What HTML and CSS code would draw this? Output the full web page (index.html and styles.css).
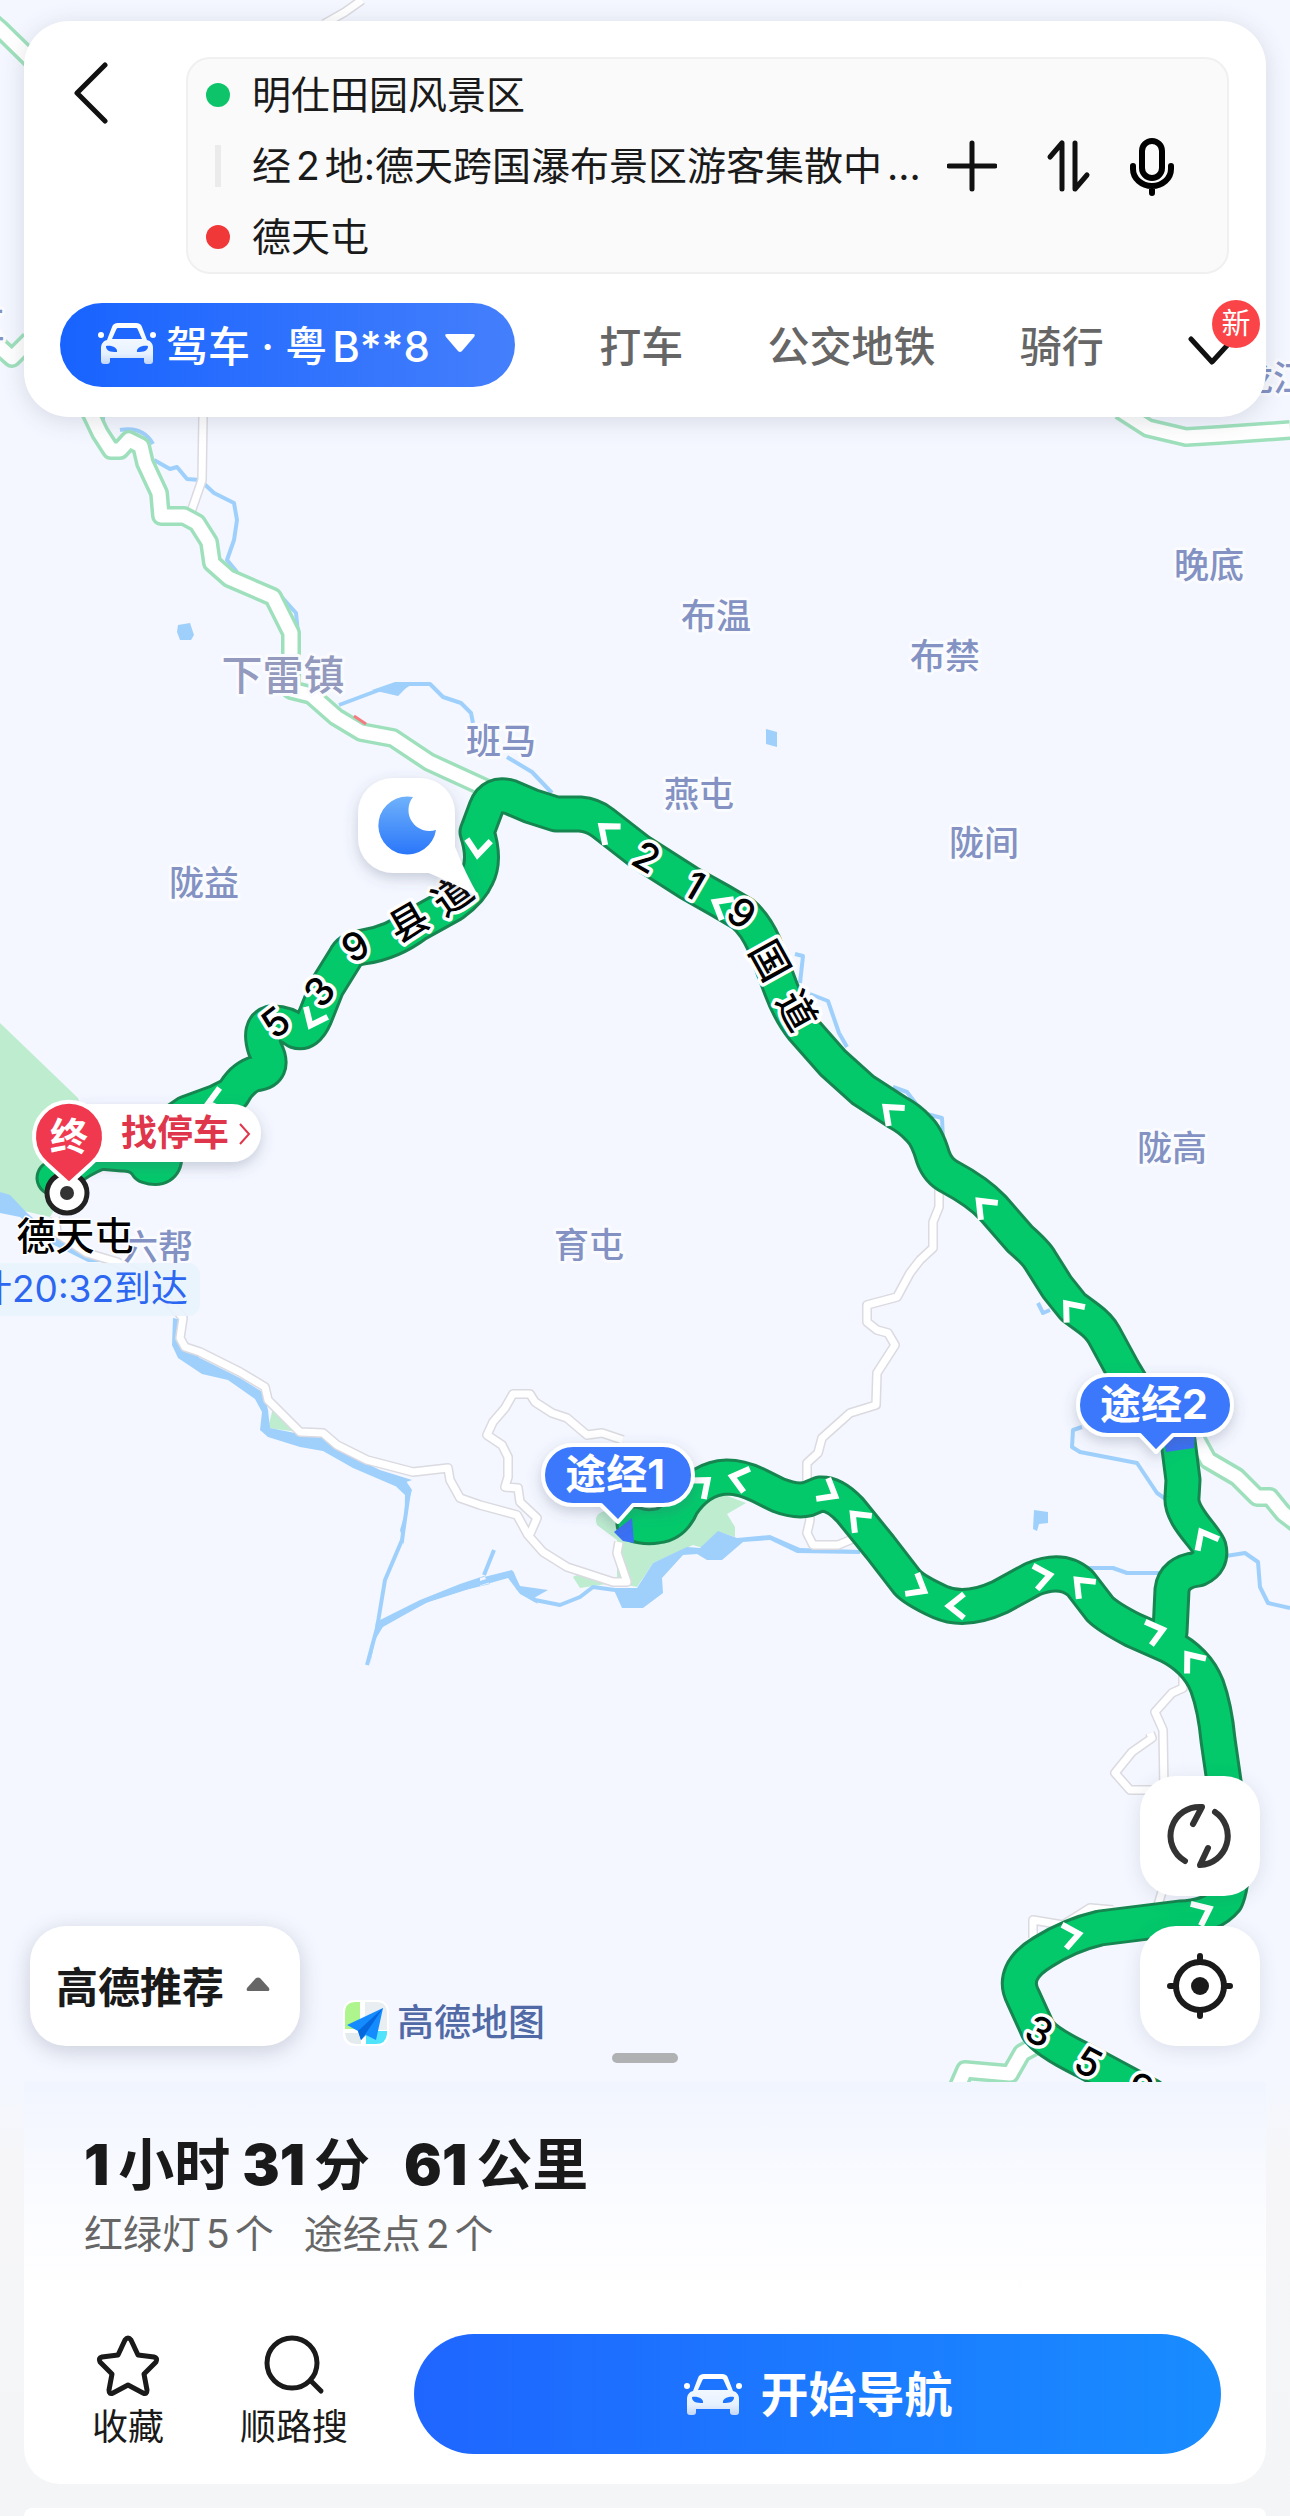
FILE: index.html
```html
<!DOCTYPE html>
<html lang="zh-CN">
<head>
<meta charset="utf-8">
<meta name="viewport" content="width=device-width, initial-scale=1">
<title>路线规划</title>
<link rel="stylesheet" href="styles.css">
</head>
<body>
<svg class="defs" aria-hidden="true">
  <defs>
    <linearGradient id="carFill" x1="0" y1="0" x2="0" y2="1"><stop offset="0" stop-color="#fff"/><stop offset="0.75" stop-color="#e6f1ff"/><stop offset="1" stop-color="#c3d6f5"/></linearGradient>
    <linearGradient id="moonFill" x1="0" y1="0" x2="0" y2="1"><stop offset="0" stop-color="#6fb2fb"/><stop offset="1" stop-color="#2a76fa"/></linearGradient>
    <filter id="soft" x="-30%" y="-30%" width="160%" height="170%"><feDropShadow dx="0" dy="5" stdDeviation="7" flood-color="#4a5878" flood-opacity="0.28"/></filter>
    <symbol id="car" viewBox="0 0 60 42">
      <path fill="url(#carFill)" fill-rule="evenodd" d="M21 1h18c3 0 5 1 6 4l5 13c4 1 6 4 6 8v13c0 2-1 3-3 3h-3c-2 0-3-1-3-3v-3H13v3c0 2-1 3-3 3H7c-2 0-3-1-3-3V26c0-4 2-7 6-8l5-13c1-3 3-4 6-4zm1 5c-2 0-2 0-3 2l-4 9h30l-4-9c-1-2-1-2-3-2zM9 24c0 5 4 6 11 6 1-4-5-7-11-6zm42 0c-6-1-12 2-11 6 7 0 11-1 11-6z"/>
      <circle cx="4" cy="13" r="3" fill="#fff"/><circle cx="56" cy="13" r="3" fill="#fff"/>
    </symbol>
    <path id="arrow" d="M-12 9 0 -6 12 9"/>
  </defs>
</svg>
<div class="app">
  <main class="map">
    <svg class="map-canvas" viewBox="0 0 1290 2082" preserveAspectRatio="xMidYMid slice" role="img" aria-label="路线地图">
      <g class="park">
        <path d="M0 1023 78 1098 92 1145 50 1217 20 1210 0 1192z"/>
        <path d="M273 1408 298 1432 268 1428z"/>
        <path d="M597 1525Q590 1508 625 1510L722 1494 746 1503 727 1514 735 1527 735 1537 720 1532 710 1550 693 1545 653 1563 637 1587 617 1583 617 1540z"/>
        <path d="M573 1577 580 1573 613 1583 580 1588z"/>
      </g>
      <g class="water-area">
        <path d="M0 1192 10 1195 27 1213 53 1235 100 1262 88 1262 50 1243 20 1217 0 1213z"/>
        <path d="M173 1318 172 1345 178 1358 202 1374 228 1380 255 1399 262 1412 260 1430 268 1437 300 1447 323 1451 353 1468 395 1486 412 1480 380 1470 355 1458 323 1436 300 1434 270 1428 268 1410 264 1393 240 1378 200 1358 180 1340 183 1320z"/>
        <path d="M613 1588 637 1588 653 1563 687 1547 700 1548 718 1531 737 1538 770 1535 800 1548 860 1550 860 1554 797 1553 770 1540 743 1542 722 1560 707 1560 697 1554 683 1555 662 1578 663 1593 643 1608 622 1608z"/>
        <path d="M178 625 190 623 194 635 191 640 180 640 177 632z"/>
        <path d="M766 729 777 732 777 747 766 744z"/>
        <path d="M1034 1510 1048 1512 1048 1523 1039 1524 1037 1531 1033 1529z"/>
        <path d="M372 690 395 682 412 682 404 690 398 696zM404 1545 400 1530 412 1490 404 1478 385 1476 405 1495zM370 1665 375 1640 384 1625 430 1601 465 1590 490 1584 484 1576 460 1584 420 1600 376 1622zM480 1578 512 1570 520 1586 548 1590 534 1598 538 1604 520 1594 508 1578 480 1586z"/>
      </g>
      <g class="water">
        <path d="M103 417v10M120 430Q143 426 153 444M154 460 170 469 177 467 187 479 200 480 214 493 234 503 237 520 234 540 227 560 237 572M280 595 296 613 298 633"/>
        <path d="M339 705 379 690 400 689 409 684 430 684 443 697 461 703 471 713 473 723M507 757 532 772 552 793"/>
        <path d="M795 954 803 956 800 983M810 994 828 1001 839 1033 847 1047M893 1087 907 1092 923 1113 942 1118 943 1140M1038 1303 1043 1313 1050 1310"/>
        <path d="M395 1480 409 1492 402 1540 385 1580 377 1628 367 1665M377 1628 425 1601 465 1588 490 1580 512 1573 518 1588 535 1600 560 1605 580 1597 593 1587 615 1590M484 1575 494 1550"/>
        <path d="M1082 1427 1073 1430 1072 1447 1080 1452 1137 1463 1157 1493 1170 1502M1088 1568 1113 1568 1127 1573 1165 1573M1226 1556 1245 1553 1258 1562 1260 1587 1268 1603 1290 1608"/>
      </g>
      <g class="minor-case">
        <path id="m1" d="M362 0 345 12 324 24M203 417 202 480 191 512M55 1217 57 1233 87 1253 117 1262 150 1280 183 1318 180 1338 185 1347 200 1352 240 1372 265 1387 268 1400 300 1432 323 1433 337 1445 367 1460 413 1472 448 1468 450 1480 460 1498 480 1505 517 1515 528 1535 543 1552 567 1567 613 1582 627 1582 617 1553 619 1542"/>
        <path id="m2" d="M623 1440 602 1433 587 1435 567 1418 552 1413 535 1402 530 1394 513 1394 505 1408 493 1422 487 1435 502 1445 508 1457 508 1477 505 1487 518 1488 520 1502 537 1518 530 1534"/>
        <path id="m3" d="M939 1185 939 1207 933 1222 933 1248 920 1260 910 1273 897 1297 867 1305 867 1322 877 1330 888 1333 895 1345 877 1373 876 1405 850 1413 822 1438 818 1453 807 1463 807 1490 810 1520 807 1533 813 1545 838 1545 855 1538"/>
        <path id="m4" d="M1183 1670V1688L1172 1693 1155 1712 1163 1730 1164 1790H1130L1115 1773 1132 1752 1152 1738 1150 1733M1164 1785V1885L1158 1905M1033 1938V1920L1063 1925 1090 1908 1113 1910"/>
      </g>
      <g class="minor-fill"><use href="#m1"/><use href="#m2"/><use href="#m3"/><use href="#m4"/></g>
      <g class="major-case">
        <path id="j1" d="M-8 22 0 29 40 68M-8 340 12 358 30 340M89 410 100 433 111 450H120L129 440 141 446 145 463 159 493 161 516H184L197 523 209 542 212 563 229 578 273 597 291 633V690L311 695 336 717 361 732 393 738 429 762 490 790"/>
        <path id="j2" d="M1120 410 1148 428 1186 437 1219 435 1290 430M1197 1440 1208 1460 1237 1477 1257 1497H1270L1283 1513 1296 1523M958 2086 965 2070 1010 2074 1022 2053 1046 2040"/>
      </g>
      <g class="major-fill"><use href="#j1"/><use href="#j2"/></g>
      <path d="m354 716 12 8" stroke="#f47b80" stroke-width="3"/>

      <g class="route-case">
        <path id="r1" d="M634 1524Q645 1528 657 1526Q674 1524 682 1505Q700 1478 727 1477Q742 1477 760 1486L778 1495Q796 1502 808 1499L820 1494Q834 1493 850 1510L880 1547 907 1582Q914 1590 940 1602Q965 1613 1000 1597L1033 1579Q1062 1567 1080 1583L1100 1609Q1108 1617 1133 1630L1167 1645Q1197 1660 1207 1686Q1215 1708 1218 1740L1231 1830Q1235 1880 1226 1900Q1212 1917 1180 1918L1100 1928Q1070 1935 1043 1952Q1010 1972 1023 1997L1038 2030Q1046 2042 1083 2060L1150 2096"/>
        <path id="r2" d="M1170 1632 1172 1590Q1174 1572 1198 1569Q1213 1562 1209 1547C1206 1537 1180 1516 1182 1497L1183 1480 1176 1425 1135 1390 1123 1370 1104 1335Q1099 1326 1088 1318L1073 1307 1057 1287 1040 1260Q1036 1253 1020 1239L993 1208Q978 1192 950 1177Q938 1171 933 1157Q927 1136 918 1128Q910 1119 897 1112L863 1090 833 1063 803 1029Q790 1013 781 989L764 944Q755 924 743 914L721 901 689 883 639 851 603 823Q593 815 580 814H556L531 806 510 797Q492 792 486 808L477 832Q486 860 477 877Q471 891 453 904L417 924Q392 943 363 947Q349 949 345 958L327 987 315 1017Q307 1035 296 1031Q285 1022 271 1023Q258 1027 265 1049Q277 1072 254 1074Q241 1079 233 1094L217 1102 187 1113Q156 1132 165 1155Q165 1172 147 1166Q140 1154 123 1154L100 1152Q80 1160 67 1171L54 1178"/>
      </g>
      <g class="route-fill"><use href="#r1"/><use href="#r2"/></g>
      <path d="M1162 1432h33l-1 16-28 4zM632 1518l2 25-11-2-9-9z" fill="#3a70f5"/>
      <g class="arrows">
        <use href="#arrow" transform="translate(606 830) rotate(-50)"/>
        <use href="#arrow" transform="translate(720 905) rotate(-60)"/>
        <use href="#arrow" transform="translate(890 1111) rotate(-48)"/>
        <use href="#arrow" transform="translate(983 1205) rotate(-45)"/>
        <use href="#arrow" transform="translate(1070 1308) rotate(-40)"/>
        <use href="#arrow" transform="translate(1204 1537) rotate(-28)"/>
        <use href="#arrow" transform="translate(1191 1659) rotate(-38)"/>
        <use href="#arrow" transform="translate(1157 1631) rotate(75)"/>
        <use href="#arrow" transform="translate(1044 1576) rotate(80)"/>
        <use href="#arrow" transform="translate(1081 1584) rotate(-45)"/>
        <use href="#arrow" transform="translate(955 1606) rotate(-90)"/>
        <use href="#arrow" transform="translate(919 1588) rotate(120)"/>
        <use href="#arrow" transform="translate(830 1493) rotate(120)"/>
        <use href="#arrow" transform="translate(857 1518) rotate(-45)"/>
        <use href="#arrow" transform="translate(738 1478) rotate(-75)"/>
        <use href="#arrow" transform="translate(703 1484) rotate(50)"/>
        <use href="#arrow" transform="translate(1073 1935) rotate(80)"/>
        <use href="#arrow" transform="translate(1204 1911) rotate(65)"/>
        <use href="#arrow" transform="translate(478 849) rotate(185)"/>
        <use href="#arrow" transform="translate(313 1020) rotate(205)"/>
        <use href="#arrow" transform="translate(214 1102) rotate(-105)"/>
      </g>

      <g class="place">
        <text x="283" y="690" class="town">下雷镇</text>
        <text x="501" y="754">班马</text>
        <text x="204" y="896">陇益</text>
        <text x="716" y="629">布温</text>
        <text x="945" y="669">布禁</text>
        <text x="1209" y="578">晚底</text>
        <text x="699" y="807">燕屯</text>
        <text x="984" y="856">陇间</text>
        <text x="1172" y="1161">陇高</text>
        <text x="589" y="1258">育屯</text>
        <text x="158" y="1260">六帮</text>
        <text x="1273" y="391">龙江</text>
        <text x="-13" y="338">区</text>
      </g>
      <g class="road-name">
        <text transform="translate(646 858) rotate(30)" y="13">2</text>
        <text transform="translate(694 886) rotate(30)" y="13">1</text>
        <text transform="translate(741 914) rotate(35)" y="13">9</text>
        <text transform="translate(769 961) rotate(61)" y="13">国</text>
        <text transform="translate(796 1011) rotate(61)" y="13">道</text>
        <text transform="translate(276 1023) rotate(-38)" y="13">5</text>
        <text transform="translate(320 992) rotate(-48)" y="13">3</text>
        <text transform="translate(356 947) rotate(-30)" y="13">9</text>
        <text transform="translate(409 923) rotate(-30)" y="13">县</text>
        <text transform="translate(453 896) rotate(-35)" y="13">道</text>
        <text transform="translate(1039 2032) rotate(28)" y="13">3</text>
        <text transform="translate(1088 2063) rotate(28)" y="13">5</text>
        <text transform="translate(1140 2089) rotate(28)" y="13">9</text>
      </g>

      <g filter="url(#soft)">
        <path d="M393 778h27a35 35 0 0 1 35 35v34q10 26 24 50q-26 -14 -50 -24h-36a35 35 0 0 1-35-35v-25a35 35 0 0 1 35-35z" fill="#fff"/>
      </g>
      <path d="M413 797A29 29 0 1 0 436 830A21 21 0 0 1 413 797z" fill="url(#moonFill)"/>

      <g class="via" filter="url(#soft)">
        <path d="M573 1445h90a30 30 0 0 1 0 60h-30l-15 17-17-17h-28a30 30 0 0 1 0-60z"/>
        <path d="M1108 1375h94a30 30 0 0 1 0 60h-29l-17 17-16-17h-32a30 30 0 0 1 0-60z"/>
      </g>
      <g class="via-text"><text x="615" y="1489">途经1</text><text x="1154" y="1419">途经2</text></g>

      <circle cx="67" cy="1193" r="20" fill="#fff" stroke="#222" stroke-width="5"/>
      <circle cx="67" cy="1193" r="7" fill="#333"/>
      <a href="#parking" aria-label="找停车">
        <rect x="60" y="1104" width="201" height="58" rx="29" fill="#fff" filter="url(#soft)"/>
        <text x="175" y="1146" class="parking">找停车</text>
        <path d="m240 1124 9 10-9 10" fill="none" stroke="#e0364b" stroke-width="2"/>
      </a>
      <path d="M47 1164A35 35 0 1 1 91 1164L69 1184z" fill="#f0384f" stroke="#fff" stroke-width="4" stroke-linejoin="round"/>
      <text x="69" y="1150" class="end">终</text>
      <text x="75" y="1250" class="dest">德天屯</text>
      <rect x="-20" y="1263" width="220" height="53" rx="12" fill="#e9f3fd" fill-opacity="0.9"/>
      <text x="188" y="1302" class="eta">预计20:32到达</text>
    </svg>

    <header class="planner">
      <div class="planner-top">
        <button class="icon-btn back" aria-label="返回"><svg width="36" height="62" viewBox="0 0 36 62"><path d="M33 3 5 31l28 28"/></svg></button>
        <section class="route-box" aria-label="行程">
          <ul class="stops">
            <li><i class="dot start"></i><span>明仕田园风景区</span></li>
            <li><i class="bar"></i><span>经<b class="num">2</b>地:德天跨国瀑布景区游客集散中<b class="more-text">...</b></span></li>
            <li><i class="dot finish"></i><span>德天屯</span></li>
          </ul>
          <div class="tools">
            <button class="icon-btn" aria-label="添加途经点"><svg width="50" height="60" viewBox="0 0 50 60"><path d="M25 7v46M2 30h46"/></svg></button>
            <button class="icon-btn" aria-label="交换起终点"><svg width="50" height="60" viewBox="0 0 50 60"><path d="M7 21 19 7v46M32 7v46l12-14"/></svg></button>
            <button class="icon-btn mic" aria-label="语音输入"><svg width="50" height="60" viewBox="0 0 50 60"><rect x="15" y="5" width="20" height="37" rx="10"/><path d="M6 30v3a19 17 0 0 0 38 0v-3M25 50v7"/></svg></button>
          </div>
        </section>
      </div>
      <nav class="modes" aria-label="出行方式">
        <button class="mode active"><svg width="60" height="42"><use href="#car"/></svg><span>驾车 · 粤<b class="num">B**8</b></span><svg width="32" height="20" viewBox="0 0 32 20"><path d="M3 1h26q3 0 1 3L18 18q-2 2-4 0L2 4Q0 1 3 1z" fill="#fff"/></svg></button>
        <button class="mode">打车</button>
        <button class="mode">公交地铁</button>
        <button class="mode">骑行</button>
        <button class="icon-btn more" aria-label="更多出行方式"><svg width="48" height="30" viewBox="0 0 48 30"><path d="M3 3 24 26 45 3"/></svg><em class="badge">新</em></button>
      </nav>
    </header>

    <div class="map-foot">
      <button class="prefer">高德推荐<svg width="24" height="14" viewBox="0 0 24 14"><path d="M10 1q2-1 4 0l9 10q1 3-1 3H2q-2 0-1-3z" fill="#666"/></svg></button>
      <div class="brand">
        <svg width="46" height="46" viewBox="0 0 46 46"><rect width="46" height="46" rx="11" fill="#fff"/><path d="M17 2v27H2V13Q2 2 13 2z" fill="#adf58c"/><path d="M22 2h11q11 0 11 11v17H22z" fill="#e9eef2"/><path d="M2 33h16v11h-5Q3 44 2 33z" fill="#e4ebee"/><path d="M23 31h21v3q-1 10-11 10H23z" fill="#50e3fb"/><path d="M40 8 4 25l11 6 3 9 5-5 10 5z" fill="#148bff"/><path d="M40 8 15 31l3 9 5-7z" fill="#0568dd"/></svg>
        <span>高德地图</span>
      </div>
      <div class="float-tools">
        <button class="float-btn" aria-label="刷新路线"><svg width="66" height="66" viewBox="0 0 66 66" stroke="#333"><path d="M18 58A29 29 0 0 1 35 4L26 21M48 9A29 29 0 0 1 33 62L41 45"/></svg></button>
        <button class="float-btn" aria-label="定位"><svg width="66" height="66" viewBox="0 0 66 66" stroke="#1a1a1a"><circle cx="33" cy="33" r="24"/><path d="M33 3v6M33 57v6M3 33h6M57 33h6"/><circle cx="33" cy="33" r="9" fill="#1a1a1a" stroke="none"/></svg></button>
      </div>
      <i class="handle"></i>
    </div>
  </main>

  <section class="sheet">
    <div class="summary">
      <h1><b>1</b>小时<b class="gap-s">31</b>分<b class="gap-l">61</b>公里</h1>
      <p><span>红绿灯<b class="num">5</b>个</span><span>途经点<b class="num">2</b>个</span></p>
      <div class="actions">
        <button class="act"><svg width="66" height="62" viewBox="0 0 66 62"><path d="M30 5q3-4 6 0l7 15 16 2q4 1 2 5L49 39l3 16q0 5-4 3L33 50l-15 8q-4 2-4-3l3-16L5 27q-2-4 2-5l16-2z"/></svg>收藏</button>
        <button class="act"><svg width="66" height="62" viewBox="0 0 66 62"><circle cx="31" cy="28" r="25"/><path d="M50 46 60 56"/></svg>顺路搜</button>
        <button class="go"><svg width="60" height="42"><use href="#car"/></svg><span>开始导航</span></button>
      </div>
    </div>
    <div class="next"></div>
  </section>
</div>
</body>
</html>
```
FILE: styles.css
```css
* { box-sizing: border-box; }
body {
  margin: 0;
  background: #f3f5f7;
  color: #1a1a1a;
  font-family: Inter, "Noto Sans CJK SC", sans-serif;
}
button {
  border: 0;
  padding: 0;
  background: none;
  color: inherit;
  font: inherit;
  white-space: nowrap;
}
svg { display: block; flex: none; }
.defs { position: absolute; width: 0; height: 0; }
.app {
  display: flex;
  flex-direction: column;
  min-height: 100vh;
}

/* map */
.map {
  position: relative;
  flex: 1;
  display: flex;
  flex-direction: column;
  justify-content: space-between;
  gap: 400px;
  padding: 21px 24px 36px;
  background: #f4f7ff;
  overflow: hidden;
}
.map-canvas {
  position: absolute;
  inset: 0;
  width: 100%;
  height: 100%;
}
.park { fill: #bdeccf; }
.water-area { fill: #9fd0fb; }
.water { fill: none; stroke: #9fd0fb; stroke-width: 4; stroke-linejoin: round; }
.minor-case, .minor-fill, .major-case, .major-fill, .route-case, .route-fill {
  fill: none;
  stroke-linejoin: round;
}
.minor-case { stroke: #dadae0; stroke-width: 10; }
.minor-fill { stroke: #fff; stroke-width: 7; }
.major-case { stroke: #9fe0bc; stroke-width: 20; }
.major-fill { stroke: #fff; stroke-width: 13; }
.route-case, .route-fill { stroke-linecap: round; }
.route-case { stroke: #16854f; stroke-width: 37; }
.route-fill { stroke: #03c96b; stroke-width: 31; }
.arrows { fill: none; stroke: #fff; stroke-width: 6; }
.map-canvas text {
  text-anchor: middle;
  font-weight: 500;
  paint-order: stroke;
  stroke-linejoin: round;
}
.place text { font-size: 35px; fill: #8392c2; stroke: #fafbff; stroke-width: 6px; }
.place .town { font-size: 41px; fill: #939abd; }
.road-name text { font-size: 39px; fill: #000; stroke: #fff; stroke-width: 7px; }
.via path { fill: #3a78fb; stroke: #fff; stroke-width: 4; stroke-linejoin: round; }
.via-text text { font-size: 41px; font-weight: 700; fill: #fff; }
.map-canvas .parking { font-size: 36px; font-weight: 700; fill: #e0364b; }
.map-canvas .end { font-size: 38px; font-weight: 700; fill: #fff; }
.map-canvas .dest { font-size: 39px; fill: #000; stroke: #fff; stroke-width: 3px; }
.map-canvas .eta { font-size: 37px; font-weight: 400; fill: #2c66f1; text-anchor: end; }

/* planner card */
.planner {
  position: relative;
  padding: 36px 30px 30px 36px;
  border-radius: 45px;
  background: #fff;
  box-shadow: 0 4px 24px rgba(60, 70, 90, 0.16);
}
.planner-top { display: flex; align-items: flex-start; }
.icon-btn svg {
  fill: none;
  stroke: #111;
  stroke-width: 5;
  stroke-linecap: round;
  stroke-linejoin: round;
}
.icon-btn.mic svg { stroke: #000; stroke-width: 6; }
.back { flex: none; width: 126px; padding: 5px 0 0 12px; }
.route-box {
  flex: 1;
  min-width: 0;
  display: flex;
  align-items: center;
  margin-right: 7px;
  padding-right: 50px;
  border: 2px solid #f0f0f1;
  border-radius: 24px;
  background: #fafafa;
}
.stops {
  flex: 1;
  min-width: 0;
  margin: 0;
  padding: 0 0 0 18px;
  list-style: none;
  font-size: 39px;
  line-height: 70px;
}
.stops li { display: flex; align-items: center; gap: 22px; height: 71px; }
.stops span { overflow: hidden; white-space: nowrap; }
.stops i { flex: none; width: 24px; }
.dot { height: 24px; border-radius: 50%; }
.start { background: #0dc46b; }
.finish { background: #f03838; }
.bar { height: 42px; border: solid #fafafa; border-width: 0 9px; background: #ebebeb; }
.num { margin: 0 5px; font-weight: inherit; }
.more-text { margin-left: 5px; font-weight: 400; }
.tools { display: flex; gap: 46px; }
.mic { margin-left: -12px; }
.modes {
  display: flex;
  align-items: center;
  justify-content: space-between;
  margin-top: 29px;
  font-size: 42px;
  font-weight: 500;
}
.mode { padding-bottom: 4px; color: #666; }
.active {
  display: flex;
  align-items: center;
  gap: 9px;
  height: 84px;
  padding: 0 39px 4px 37px;
  border-radius: 42px;
  background: linear-gradient(90deg, #1863ff, #447ffc);
  color: #fff;
}
.more { position: relative; padding-top: 12px; }
.badge {
  position: absolute;
  left: 24px;
  top: -24px;
  width: 48px;
  border-radius: 50%;
  background: #fb4448;
  color: #fff;
  font-size: 29px;
  font-style: normal;
  font-weight: 400;
  line-height: 48px;
}

/* controls at the foot of the map */
.map-foot {
  position: relative;
  display: flex;
  align-items: flex-end;
  padding: 0 6px;
}
.prefer {
  display: flex;
  align-items: center;
  justify-content: space-between;
  width: 270px;
  height: 120px;
  padding: 0 30px 4px 26px;
  border-radius: 36px;
  background: #fff;
  box-shadow: 0 5px 22px rgba(50, 60, 80, 0.22);
  font-size: 42px;
  font-weight: 700;
}
.brand {
  display: flex;
  align-items: center;
  gap: 8px;
  margin-left: 43px;
  color: #5169a5;
  font-size: 37px;
  font-weight: 500;
  line-height: 46px;
}
.float-tools { display: grid; gap: 30px; margin-left: auto; }
.float-btn {
  display: grid;
  place-items: center;
  width: 120px;
  height: 120px;
  border-radius: 36px;
  background: #fff;
  box-shadow: 0 4px 20px rgba(50, 60, 80, 0.12);
}
.float-btn svg { fill: none; stroke-width: 6; stroke-linecap: round; stroke-linejoin: round; }
.handle {
  position: absolute;
  left: calc(50% - 33px);
  bottom: -17px;
  width: 66px;
  height: 10px;
  border-radius: 5px;
  background: #b0b1b3;
}

/* route sheet */
.sheet {
  padding: 0 24px;
  background: linear-gradient(#f4f7ff, #f6f6f8 80px, #f3f5f7);
}
.summary {
  padding: 48px 45px 30px 60px;
  border-radius: 0 0 36px 36px;
  background: linear-gradient(#f1f5ff, #fbfcff 130px, #fff 220px);
}
h1 { margin: 0; font-size: 56px; font-weight: 700; line-height: 70px; }
h1 b { margin-right: 9px; }
.gap-s { margin-left: 12px; }
.gap-l { margin-left: 34px; }
.summary p {
  display: flex;
  gap: 30px;
  margin: 4px 0 70px;
  color: #666;
  font-size: 39px;
  line-height: 60px;
}
.actions { display: flex; align-items: center; }
.act {
  display: flex;
  flex-direction: column;
  align-items: center;
  gap: 4px;
  padding-left: 8px;
  font-size: 36px;
  line-height: 52px;
}
.act svg { fill: none; stroke: #1a1a1a; stroke-width: 5; stroke-linecap: round; stroke-linejoin: round; }
.act + .act { margin-left: 68px; }
.go {
  flex: 1;
  display: flex;
  align-items: center;
  justify-content: center;
  gap: 18px;
  height: 120px;
  margin-left: 66px;
  border-radius: 60px;
  background: linear-gradient(90deg, #1f66ff, #188cff);
  color: #fff;
  font-size: 48px;
  font-weight: 700;
}
.go span { padding-bottom: 6px; }
.next {
  height: 8px;
  margin-top: 24px;
  border-radius: 36px 36px 0 0;
  background: #fff;
}
```
